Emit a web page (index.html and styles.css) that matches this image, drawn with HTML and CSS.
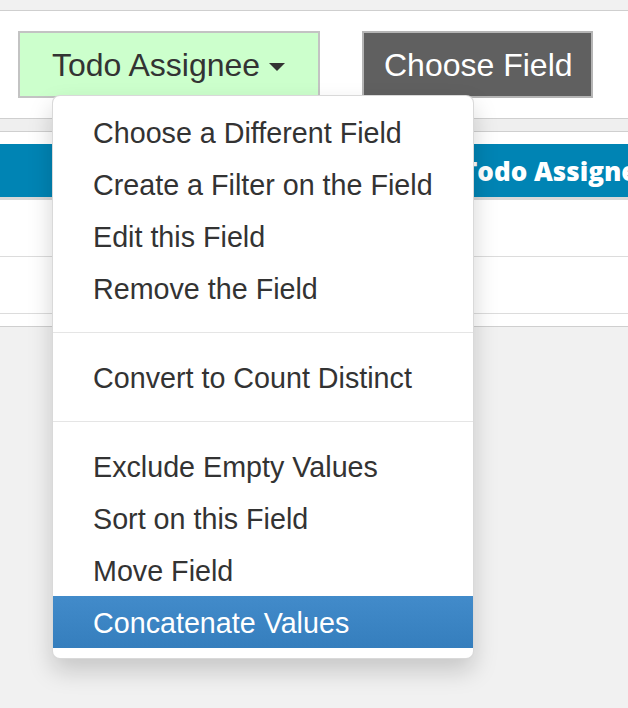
FILE: index.html
```html
<!DOCTYPE html>
<html>
<head>
<meta charset="utf-8">
<link rel="stylesheet" href="styles.css">
</head>
<body>
<div class="page">
  <div class="gap-top"></div>
  <div class="toolbar">
    <div class="dropdown">
      <button class="btn btn-field">Todo Assignee <span class="caret"></span></button>
      <ul class="menu">
        <li class="item">Choose a Different Field</li>
        <li class="item">Create a Filter on the Field</li>
        <li class="item">Edit this Field</li>
        <li class="item">Remove the Field</li>
        <li class="divider"></li>
        <li class="item">Convert to Count Distinct</li>
        <li class="divider"></li>
        <li class="item">Exclude Empty Values</li>
        <li class="item">Sort on this Field</li>
        <li class="item">Move Field</li>
        <li class="item active">Concatenate Values</li>
      </ul>
    </div>
    <button class="btn btn-choose">Choose Field</button>
  </div>
  <div class="strip"></div>
  <div class="table">
    <div class="thead">Todo Assignee</div>
    <div class="row"></div>
    <div class="row"></div>
    <div class="tail"></div>
  </div>
</div>
</body>
</html>
```

FILE: styles.css
```css
html, body {
  margin: 0;
  padding: 0;
}
body {
  background: #f1f1f1;
  font-family: "Liberation Sans", Arial, sans-serif;
  color: #333;
  width: 628px;
  height: 708px;
  overflow: hidden;
}
.page {
  width: 628px;
}
.gap-top {
  height: 10px;
}
.toolbar {
  background: #fff;
  border-top: 1px solid #cfcfcf;
  border-bottom: 1px solid #cfcfcf;
  height: 87px;
  padding: 20px 0 0 18px;
  display: flex;
  align-items: flex-start;
  gap: 42px;
}
.dropdown {
  position: relative;
}
.btn {
  font-family: "Liberation Sans", Arial, sans-serif;
  font-size: 32px;
  height: 67px;
  margin: 0;
  border: 2px solid #c3c3c3;
  display: flex;
  align-items: center;
  white-space: nowrap;
  padding-top: 3px;
}
.btn-field {
  width: 302px;
  background: #ccffcc;
  color: #333;
  padding-left: 32px;
  padding-right: 0;
}
.caret {
  display: inline-block;
  width: 0;
  height: 0;
  margin-left: 9px;
  margin-top: 2px;
  border-top: 8px solid #333;
  border-left: 8px solid transparent;
  border-right: 8px solid transparent;
}
.btn-choose {
  width: 231px;
  background: #606060;
  color: #fff;
  padding-left: 20px;
  padding-right: 0;
  border-color: #b5b5b5;
}
.menu {
  position: absolute;
  left: 34px;
  top: 64px;
  width: 420px;
  margin: 0;
  padding: 10px 0;
  list-style: none;
  background: #fff;
  border: 1px solid rgba(0, 0, 0, 0.15);
  border-radius: 8px;
  box-shadow: 0 12px 24px rgba(0, 0, 0, 0.175);
  z-index: 10;
}
.item {
  height: 49px;
  line-height: 49px;
  padding: 3px 40px 0;
  font-size: 28.7px;
  color: #333;
  white-space: nowrap;
}
.item.active {
  color: #fff;
  background: linear-gradient(#428bca, #357ebd);
}
.divider {
  height: 1px;
  margin: 18px 0;
  background: #e5e5e5;
}
.strip {
  height: 12px;
  background: #efefef;
  border-bottom: 1px solid #cfcfcf;
}
.table {
  background: #fff;
  padding-top: 12px;
  border-bottom: 1px solid #cfcfcf;
}
.thead {
  height: 53px;
  line-height: 55px;
  background: #0084b4;
  color: #fff;
  font-family: "Open Sans", sans-serif;
  font-weight: 800;
  font-size: 26px;
  padding-left: 462px;
  white-space: nowrap;
  overflow: hidden;
  border-bottom: 3px solid #d8d8d8;
}
.row {
  height: 56px;
  border-bottom: 1px solid #dcdcdc;
}
.tail {
  height: 12px;
}
```
